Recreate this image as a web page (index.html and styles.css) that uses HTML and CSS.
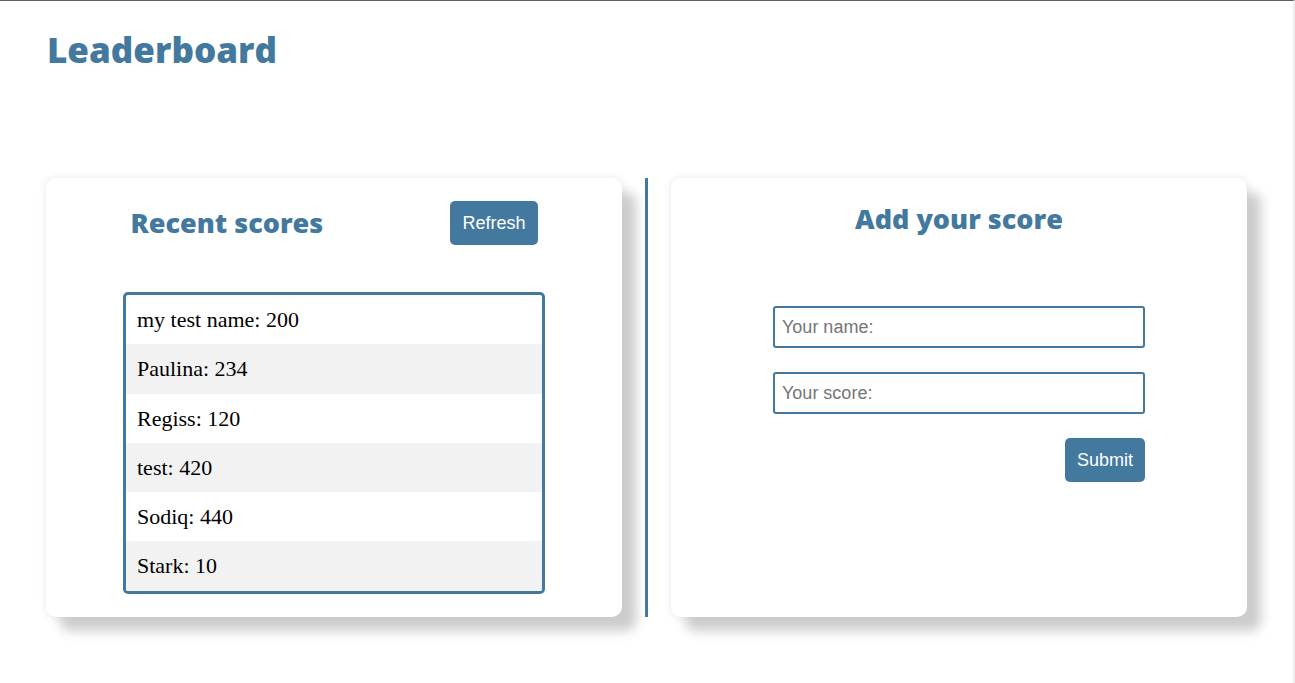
FILE: index.html
```html
<!DOCTYPE html>
<html lang="en">
<head>
    <meta charset="UTF-8">
    <meta name="viewport" content="width=device-width, initial-scale=1.0">
    <title>Leaderboard</title>
    <link rel="stylesheet" href="styles.css">
</head>
<body>
    <div class="page">
        <h1 class="title">Leaderboard</h1>

        <main class="board">
            <section class="card">
                <div class="card-head">
                    <h2>Recent scores</h2>
                    <button class="btn" id="refresh">Refresh</button>
                </div>
                <ul class="scores" id="scores">
                    <li>my test name: 200</li>
                    <li>Paulina: 234</li>
                    <li>Regiss: 120</li>
                    <li>test: 420</li>
                    <li>Sodiq: 440</li>
                    <li>Stark: 10</li>
                </ul>
            </section>

            <div class="divider"></div>

            <section class="card">
                <h2 class="center">Add your score</h2>
                <form class="score-form" id="score-form">
                    <input type="text" placeholder="Your name:" id="name">
                    <input type="text" placeholder="Your score:" id="score">
                    <button type="submit" class="btn">Submit</button>
                </form>
            </section>
        </main>
    </div>
</body>
</html>
```

FILE: styles.css
```css
* {
    margin: 0;
    padding: 0;
    box-sizing: border-box;
}

body {
    background-color: white;
    font-family: 'Liberation Serif', serif;
}

.page {
    min-height: 683px;
    border-top: 1px solid #5e5e5e;
    border-right: 2px solid #efefef;
}

.title {
    font-family: 'Open Sans', 'Lato', sans-serif;
    font-weight: 800;
    font-size: 35px;
    line-height: 45px;
    color: #43799f;
    margin: 26px 0 0 47px;
}

.board {
    display: grid;
    grid-template-columns: 576px 3px 576px;
    column-gap: 23px;
    margin: 106px 0 0 46px;
}

.card {
    background-color: white;
    border-radius: 10px;
    padding: 23px 0;
    box-shadow: 14px 14px 12px #cccccc, 0 0 8px #e6e6e6;
}

.card h2 {
    font-family: 'Open Sans', 'Lato', sans-serif;
    font-weight: 800;
    font-size: 27px;
    line-height: 34px;
    color: #43799f;
}

.card h2.center {
    text-align: center;
    margin-top: 1px;
}

.card-head {
    width: 421px;
    height: 44px;
    margin: 0 auto;
    padding: 0 7px;
    display: flex;
    justify-content: space-between;
    align-items: center;
}

.btn {
    background-color: #43799f;
    color: white;
    font-family: 'Liberation Sans', Arial, sans-serif;
    font-size: 18px;
    height: 44px;
    padding: 0 12px;
    border: none;
    border-radius: 5px;
    cursor: pointer;
}

.scores {
    list-style: none;
    width: 422px;
    margin: 47px auto 0;
    border: 3px solid #43799f;
    border-radius: 5px;
    overflow: hidden;
}

.scores li {
    font-size: 22px;
    line-height: 25.3px;
    padding: 12px 11px;
    color: black;
}

.scores li:nth-child(even) {
    background-color: #f2f2f2;
}

.divider {
    background-color: #43799f;
}

.score-form {
    width: 372px;
    margin: 70px auto 0;
    display: flex;
    flex-direction: column;
    align-items: flex-end;
    gap: 24px;
}

.score-form input {
    width: 100%;
    height: 42px;
    padding: 0 7px;
    border: 2px solid #43799f;
    border-radius: 3px;
    font-family: 'Liberation Sans', Arial, sans-serif;
    font-size: 18px;
    outline: none;
}

.score-form input::placeholder {
    color: #757575;
}
```
